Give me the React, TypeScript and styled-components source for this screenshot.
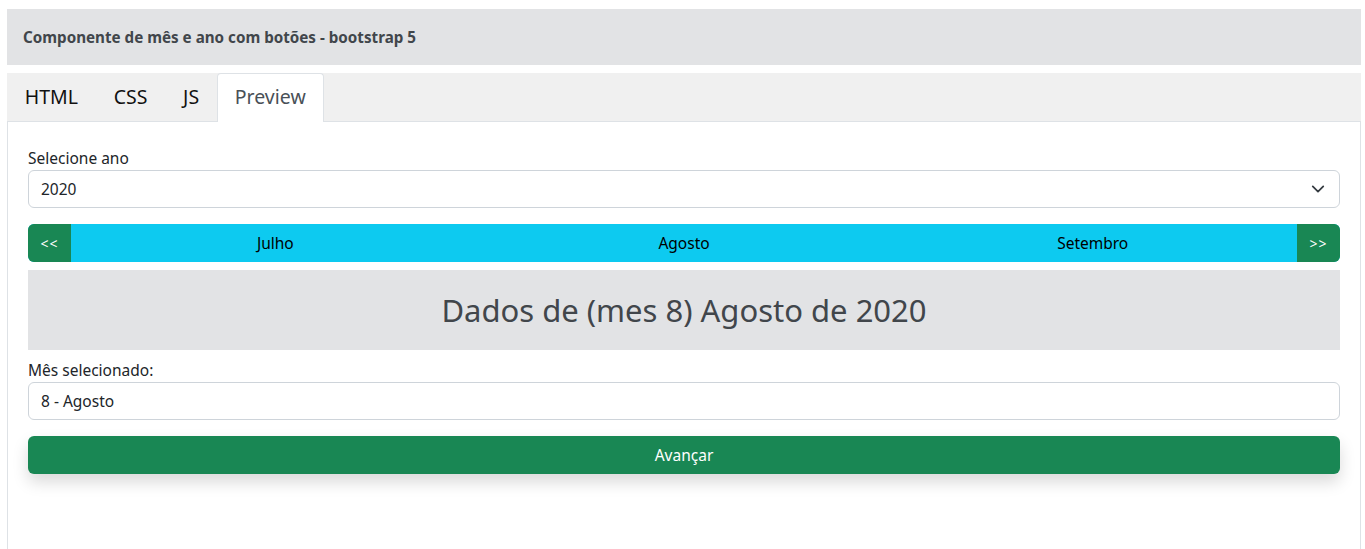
import React from "react";
import styled, { createGlobalStyle } from "styled-components";

const Global = createGlobalStyle`
  html, body { margin: 0; padding: 0; background: #fff; }
  body { font-family: "Noto Sans", "Open Sans", sans-serif; color: #212529; }
  * { box-sizing: border-box; }
`;

const Page = styled.div`
  padding: 9px 4px 0 7px;
  height: 549px;
  display: flex;
  flex-direction: column;
`;

const Header = styled.div`
  height: 56px;
  background: #e2e3e5;
  color: #41464b;
  font-weight: 700;
  font-size: 15.2px;
  display: flex;
  align-items: center;
  padding-left: 16px;
`;

const TabBar = styled.div`
  margin-top: 8px;
  height: 49px;
  background: #f0f0f0;
  border-bottom: 1px solid #dee2e6;
  display: flex;
  align-items: stretch;
`;

const Tab = styled.div<{ $active?: boolean }>`
  font-size: 19.5px;
  display: flex;
  align-items: center;
  padding: 0 16.83px 3px;
  color: ${(p) => (p.$active ? "#495057" : "#111")};
  background: ${(p) => (p.$active ? "#fff" : "transparent")};
  border: 1px solid ${(p) => (p.$active ? "#dee2e6" : "transparent")};
  border-bottom: none;
  border-radius: 4px 4px 0 0;
  margin-bottom: -1px;
`;

const Panel = styled.div`
  flex: 1;
  border-left: 1px solid #dee2e6;
  border-right: 1px solid #dee2e6;
  padding: 24px 20px 0;
  display: flex;
  flex-direction: column;
`;

const Label = styled.label`
  font-size: 15.5px;
  line-height: 24px;
`;

const Field = styled.div`
  height: 38px;
  border: 1px solid #ced4da;
  border-radius: 6px;
  font-size: 15.5px;
  display: flex;
  align-items: center;
  justify-content: space-between;
  padding: 0 14px 0 12px;
  background: #fff;
`;

const MonthBar = styled.div`
  margin-top: 16px;
  height: 38px;
  display: flex;
  border-radius: 6px;
  overflow: hidden;
  background: #0dcaf0;
`;

const NavBtn = styled.div`
  width: 43px;
  background: #198754;
  color: #fff;
  font-size: 14px;
  display: flex;
  align-items: center;
  justify-content: center;
  letter-spacing: 1px;
`;

const Month = styled.div`
  flex: 1;
  display: flex;
  align-items: center;
  justify-content: center;
  font-size: 15.5px;
  color: #000;
`;

const Display = styled.div`
  margin-top: 8px;
  height: 80px;
  background: #e2e3e5;
  color: #41464b;
  font-size: 31px;
  display: flex;
  align-items: center;
  justify-content: center;
`;

const Spacer = styled.div<{ $h: number }>`
  height: ${(p) => p.$h}px;
`;

const Button = styled.div`
  margin-top: 16px;
  height: 38px;
  background: #198754;
  color: #fff;
  border-radius: 6px;
  font-size: 15.5px;
  display: flex;
  align-items: center;
  justify-content: center;
  box-shadow: 0 8px 16px rgba(0, 0, 0, 0.15);
`;

const Chevron = () => (
  <svg width="14" height="14" viewBox="0 0 16 16">
    <path d="M2 5l6 6 6-6" fill="none" stroke="#343a40" strokeWidth="2" strokeLinecap="round" strokeLinejoin="round" />
  </svg>
);

export default function App() {
  return (
    <Page>
      <Global />
      <Header>Componente de mês e ano com botões - bootstrap 5</Header>
      <TabBar>
        <Tab>HTML</Tab>
        <Tab>CSS</Tab>
        <Tab>JS</Tab>
        <Tab $active>Preview</Tab>
      </TabBar>
      <Panel>
        <Label>Selecione ano</Label>
        <Field>
          <span>2020</span>
          <Chevron />
        </Field>
        <MonthBar>
          <NavBtn>&lt;&lt;</NavBtn>
          <Month>Julho</Month>
          <Month>Agosto</Month>
          <Month>Setembro</Month>
          <NavBtn>&gt;&gt;</NavBtn>
        </MonthBar>
        <Display>Dados de (mes 8) Agosto de 2020</Display>
        <Spacer $h={8} />
        <Label>Mês selecionado:</Label>
        <Field>
          <span>8 - Agosto</span>
        </Field>
        <Button>Avançar</Button>
      </Panel>
    </Page>
  );
}
